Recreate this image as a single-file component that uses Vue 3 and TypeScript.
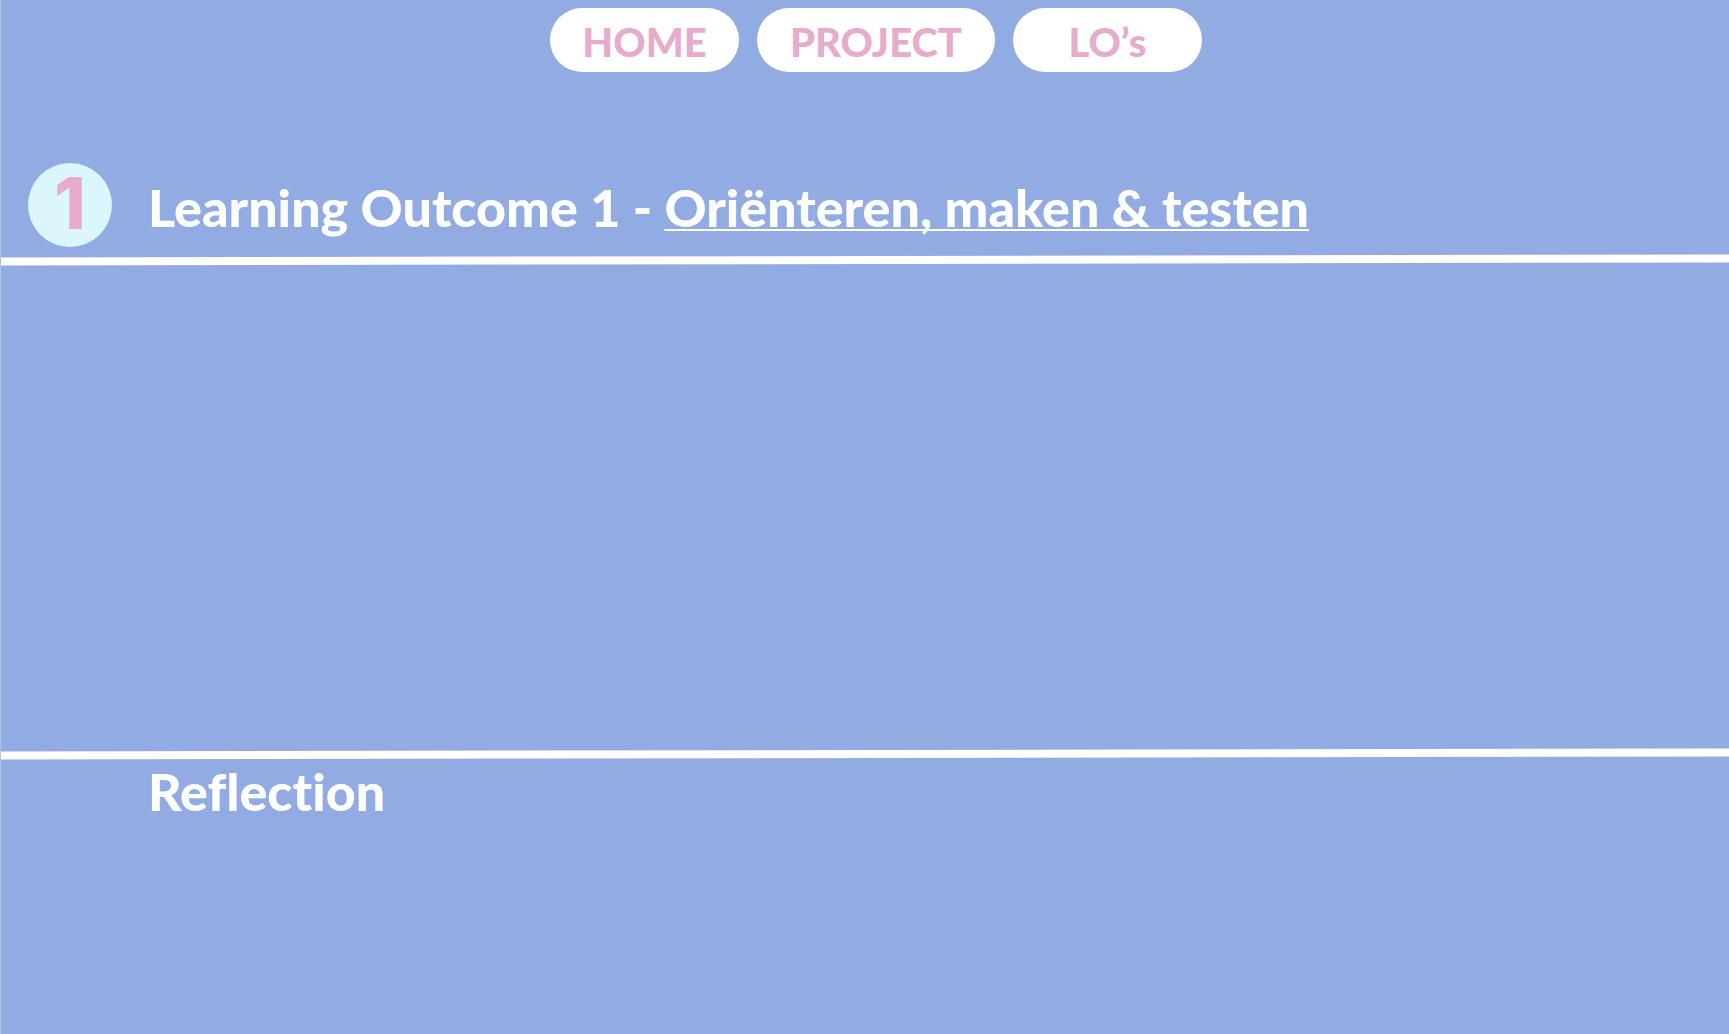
<script setup lang="ts">
interface NavItem {
  label: string
  href: string
  wide?: boolean
}

const navItems: NavItem[] = [
  { label: 'HOME', href: '#home' },
  { label: 'PROJECT', href: '#project', wide: true },
  { label: 'LO’s', href: '#los' },
]
</script>

<template>
  <div class="page">
    <nav class="nav">
      <a
        v-for="item in navItems"
        :key="item.label"
        :href="item.href"
        class="pill"
        :class="{ wide: item.wide }"
      >{{ item.label }}</a>
    </nav>
    <main>
      <header class="outcome">
        <span class="badge">1</span>
        <h1 class="title">Learning Outcome 1 - <a href="#outcome">Oriënteren, maken &amp; testen</a></h1>
      </header>
      <hr class="rule">
      <section class="content"></section>
      <hr class="rule">
      <section class="reflection">
        <h2 class="title">Reflection</h2>
      </section>
    </main>
  </div>
</template>

<style>
body {
  margin: 0;
  background: #93abe3;
}
</style>

<style scoped>
.page {
  box-sizing: border-box;
  min-height: 100vh;
  overflow: hidden;
  border-left: 1px solid #aac6e4;
  background: #93abe3;
  font-family: Lato, "Open Sans", sans-serif;
  font-variant-ligatures: none;
}

.nav {
  display: flex;
  justify-content: center;
  gap: 18px;
  padding: 8px 0 0 22px;
}

.pill {
  box-sizing: border-box;
  width: 189px;
  height: 64px;
  border-radius: 32px;
  background: #fff;
  color: #e6accd;
  font-size: 40px;
  font-weight: 900;
  line-height: 68px;
  text-align: center;
  text-decoration: none;
}

.pill.wide {
  width: 238px;
}

.outcome {
  display: flex;
  align-items: center;
  gap: 36px;
  padding: 91px 27px 9px;
}

.badge {
  flex: none;
  width: 84px;
  height: 84px;
  border-radius: 50%;
  background: #dcf6fe;
  color: #e6accd;
  font-family: Inter, sans-serif;
  font-size: 72px;
  font-weight: 800;
  line-height: 80px;
  text-align: center;
}

.title {
  margin: 0;
  color: #fff;
  font-size: 52px;
  font-weight: 900;
  line-height: 64px;
}

.outcome .title {
  padding-top: 4px;
}

.title a {
  color: inherit;
  text-decoration-thickness: 2px;
  text-underline-offset: 2px;
  text-decoration-skip-ink: none;
}

.rule {
  height: 8px;
  margin: 0 -1px;
  border: 0;
  background: #fff;
  transform: rotate(-0.1deg);
}

.content {
  min-height: 486px;
}

.reflection {
  padding: 1px 147px;
}
</style>
